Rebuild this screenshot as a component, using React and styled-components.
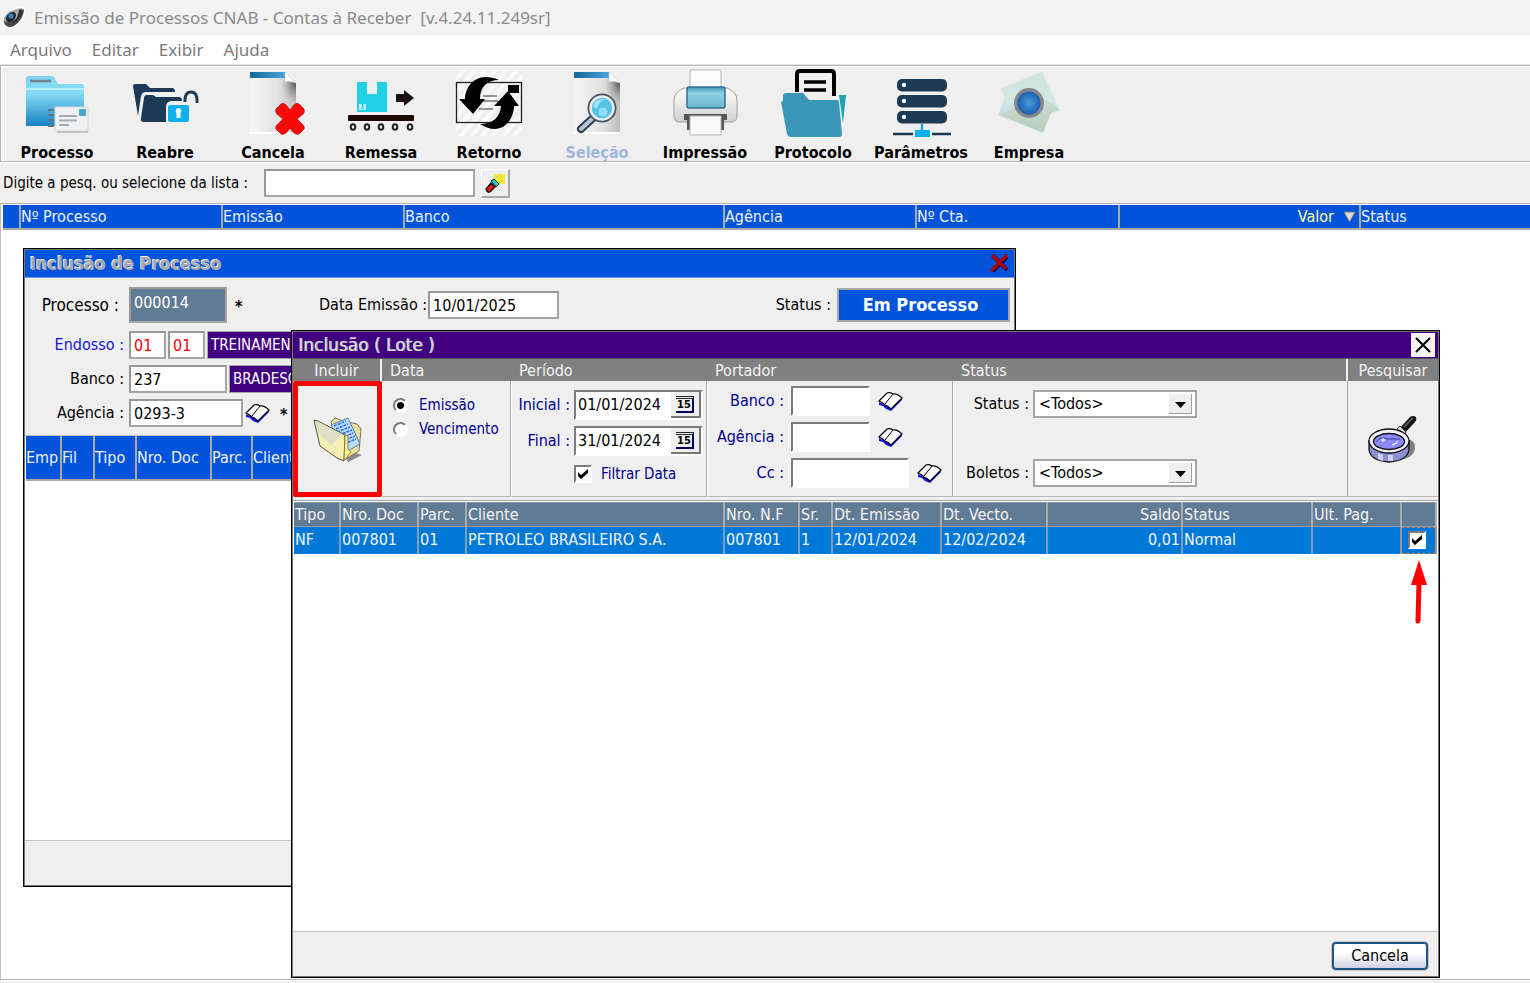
import React, { useState } from 'react';
import styled, { createGlobalStyle, css } from 'styled-components';

const GlobalStyle = createGlobalStyle`
  * { box-sizing: border-box; }
  body {
    margin: 0;
    background: #fff;
    color: #000;
    font-family: 'DejaVu Sans Condensed', 'DejaVu Sans', 'Noto Sans', sans-serif;
    font-size: 16px;
    line-height: 18px;
  }
  input, select, button { font: inherit; color: inherit; margin: 0; border-radius: 0; }
  button { padding: 0; border: 0; background: none; cursor: pointer; }
  svg { display: block; flex: none; }
`;

/* ---------- main window ---------- */

const Page = styled.div`
  min-height: 100vh;
  display: flex;
  flex-direction: column;
  background: #efefef;
`;

const TitleBar = styled.header`
  display: flex;
  align-items: center;
  gap: 8px;
  height: 35px;
  padding: 0 2px;
  background: #f3f3f3;
  color: #8a8a8a;

  h1 {
    margin: 0;
    font: 400 17px/24px 'Noto Sans', 'Open Sans', sans-serif;
    white-space: pre;
  }
`;

const MenuBar = styled.nav`
  display: flex;
  gap: 20px;
  height: 30px;
  padding: 0 10px;
  align-items: center;
  background: #fff;
  border-bottom: 1px solid #e4e4e4;
`;

const MenuItem = styled.button`
  color: #7b7b7b;
  font: 400 17px/24px 'Noto Sans', 'Open Sans', sans-serif;
`;

const Toolbar = styled.div`
  display: grid;
  grid-template-columns: repeat(10, 108px);
  height: 97px;
  padding: 2px;
  border: 1px solid #b4b4b4;
  border-right: 0;
  box-shadow: inset 1px 1px #fff;
`;

const ToolButton = styled.button`
  display: flex;
  flex-direction: column;
  align-items: center;
  gap: 6px;
  font-weight: 700;
  line-height: 18px;
  color: ${props => (props.disabled ? '#9db8d9' : '#000')};
`;

const SearchRow = styled.div`
  display: flex;
  align-items: center;
  gap: 6px;
  height: 42px;
  padding: 0 3px;
  border-top: 1px solid #fff;
  border-bottom: 1px solid #b4b4b4;

  label {
    margin-right: 10px;
    font-size: 15px;
  }
`;

const TextBox = styled.input`
  width: ${props => props.$w}px;
  height: 28px;
  padding: 0 3px;
  border: 2px solid #a6a6a6;
  border-top-color: #999;
  border-left-color: #999;
  background: #fff;
  outline: 0;
  ${props => props.$red && 'color: #f00000;'}
  ${props => props.$slate && css`
    height: 36px;
    padding-bottom: 6px;
    background: #627b95;
    color: #fff;
  `}
`;

const TorchButton = styled.button`
  display: grid;
  place-items: center;
  width: 29px;
  height: 29px;
  border: 1px solid #fff;
  border-right: 2px solid #a8a8a8;
  border-bottom: 2px solid #a8a8a8;
`;

const BlueTable = styled.table`
  width: 100%;
  table-layout: fixed;
  border-collapse: collapse;

  th {
    height: ${props => props.$h}px;
    padding: 0;
    border-right: 2px solid #aaa9a6;
    border-bottom: 2px solid #aaa9a6;
    background: #0054dc;
    color: #f2f2f2;
    font-weight: 400;
    text-align: left;
    white-space: nowrap;
    overflow: hidden;
  }
  th:last-child { border-right: 0; }
`;

const SortHead = styled.span`
  display: flex;
  justify-content: flex-end;
  align-items: center;
  gap: 9px;
  padding-right: 3px;
  color: #ffff9a;
`;

const Desktop = styled.main`
  position: relative;
  flex: 1;
  min-height: 749px;
  border-left: 1px solid #bdbdbd;
  border-bottom: 1px solid #b4b4b4;
  background: #fff;
`;

const GridHolder = styled.div`
  padding: 1px 0 0 2px;
  border-left: 1px solid #bdbdbd;
  background: #fff;
`;

const BottomStrip = styled.footer`
  height: 3px;
  border-top: 1px solid #fff;
`;

/* ---------- inner windows ---------- */

const Window = styled.section`
  position: absolute;
  display: flex;
  flex-direction: column;
  border: 1px solid #000;
  background: #efefef;
  box-shadow: inset 0 0 0 1px #777;
  padding: 1px;
`;

const ProcessWindow = styled(Window)`
  top: 18px;
  left: 22px;
  right: 514px;
  bottom: 92px;
`;

const BatchWindow = styled(Window)`
  top: 100px;
  left: 290px;
  right: 90px;
  bottom: 1px;
`;

const Caption = styled.div`
  display: flex;
  align-items: center;
  justify-content: space-between;
  height: ${props => (props.$purple ? 27 : 28)}px;
  padding: 0 ${props => (props.$purple ? 3 : 4)}px 0 5px;
  background: ${props => (props.$purple ? '#400080' : '#0054dc')};
  border-bottom: 1px solid ${props => (props.$purple ? '#555' : '#6f9de8')};

  h2 {
    margin: 0;
    line-height: 22px;
    ${props => (props.$purple ? css`
      font-family: 'DejaVu Sans', sans-serif;
      font-size: 17px;
      font-weight: 400;
      color: #d6dcd6;
      text-shadow: 1px 0 #a9b4bc;
    ` : css`
      font-size: 18px;
      font-weight: 700;
      color: #a8a8ac;
      text-shadow: -1px -1px #f0f0f4;
    `)}
  }
`;

const CloseBox = styled.button`
  display: grid;
  place-items: center;
  width: 24px;
  height: 24px;
  background: #f3f3f3;
`;

const Form = styled.form`
  display: flex;
  flex-direction: column;
  gap: 6px;
  padding: 7px 4px 8px 0;
  border-bottom: 1px solid #bdbdbd;
`;

const FormRow = styled.div`
  display: flex;
  align-items: center;
  gap: ${props => props.$gap || 0}px;
  height: ${props => props.$h || 28}px;
`;

const Label = styled.label`
  width: ${props => (props.$w ? props.$w + 'px' : 'auto')};
  padding-right: ${props => props.$pad || 4}px;
  flex: none;
  text-align: right;
  white-space: nowrap;
  font-size: ${props => (props.$big ? 17 : 16)}px;
  color: ${props => props.$color || '#000'};
`;

const Star = styled.b`
  width: ${props => props.$w}px;
  padding: 4px 8px 0;
`;

const Spacer = styled.span`
  flex: 1;
`;

const StatusBox = styled.output`
  display: grid;
  place-items: center;
  width: 173px;
  height: 34px;
  border: 2px solid #a6a6a6;
  background: #0054dc;
  color: #fff;
  font-size: 18px;
  font-weight: 700;
  padding-right: 6px;
`;

const PurpleBox = styled.output`
  flex: 1;
  height: 28px;
  padding: 0 3px;
  border: 1px solid #a6a6a6;
  background: #400080;
  color: #fff;
  font-size: 15px;
  line-height: 26px;
`;

const WhitePane = styled.div`
  flex: 1;
  padding: 0 1px;
  background: #fff;
  border-bottom: 1px solid #c4c4c4;
`;

const Foot = styled.div`
  display: flex;
  align-items: center;
  justify-content: flex-end;
  height: 44px;
  padding: 4px 10px 0;
`;

const CancelButton = styled.button`
  width: 96px;
  height: 28px;
  border: 2px solid #1d5384;
  border-radius: 4px;
  background: linear-gradient(#fff 40%, #cfcfe4);
  box-shadow: 0 0 0 1px #c9c5ba;
`;

/* ---------- filters of the batch window ---------- */

const Filters = styled.form`
  display: grid;
  grid-template-columns: 89px 129px 196px 246px 1fr 90px;
  height: 138px;
`;

const Panel = styled.fieldset`
  min-width: 0;
  margin: 0;
  padding: 0;
  border: 0;
  display: flex;
  flex-direction: column;
`;

const PanelTitle = styled.div`
  height: 22px;
  padding: 0 8px;
  background: #808080;
  color: #f4f4f4;
  line-height: 23px;
  text-align: ${props => (props.$center ? 'center' : 'left')};
  border-right: ${props => (props.$line ? '2px solid #efefef' : 0)};
`;

const PanelBody = styled.div`
  flex: 1;
  display: flex;
  flex-direction: column;
  gap: ${props => props.$gap || 0}px;
  padding: ${props => props.$pad || '0'};
  border-right: 1px solid #a6a6a6;
  border-left: 1px solid #fff;
  border-bottom: 1px solid #b9b9b9;
  color: #00008b;
`;

const IncludeButton = styled.button`
  display: grid;
  place-items: center;
  flex: 1;
  border: 5px solid #f00;
  border-radius: 2px;
`;

const SearchButton = styled.button`
  display: grid;
  place-items: center;
  flex: 1;
  border-bottom: 1px solid #b9b9b9;
`;

const sunken = css`
  border: 2px solid;
  border-color: #7b7b7b #fff #fff #7b7b7b;
  background-color: #fff;
`;

const Radio = styled.input`
  appearance: none;
  width: 15px;
  height: 15px;
  border: 2px solid;
  border-color: #7b7b7b #fff #fff #7b7b7b;
  border-radius: 50%;
  background: #fff;

  &:checked { background: radial-gradient(circle, #000 3px, #fff 4px); }
`;

const Check = styled.input`
  appearance: none;
  width: 18px;
  height: 18px;
  ${sunken}
  &:checked {
    background-image: url("data:image/svg+xml,%3Csvg xmlns='http://www.w3.org/2000/svg' viewBox='0 0 14 14'%3E%3Cpath d='M2 5v4l3 3 7-6V2L5 8z'/%3E%3C/svg%3E");
  }
`;

const Option = styled.label`
  display: flex;
  align-items: center;
  gap: ${props => props.$gap}px;
  height: 24px;
  font-size: 15px;
`;

const DateBox = styled.div`
  display: flex;
  width: 129px;
  height: 30px;
  ${sunken}

  input {
    flex: 1;
    min-width: 0;
    padding: 0 0 0 2px;
    border: 0;
    color: #000;
    outline: 0;
  }
`;

const CalendarButton = styled.button`
  display: grid;
  place-items: center;
  width: 30px;
  background: #efefef;
  border-right: 2px solid #777;
  border-bottom: 2px solid #777;

  span {
    width: 18px;
    height: 17px;
    border-top: 3px double #222;
    border-right: 2px solid #000060;
    border-bottom: 2px solid #000060;
    color: #000;
    font-size: 11px;
    font-weight: 700;
    line-height: 12px;
  }
`;

const SunkenInput = styled.input`
  width: ${props => props.$w}px;
  height: 30px;
  margin-right: 8px;
  outline: 0;
  ${sunken}
`;

const SelectBox = styled.span`
  position: relative;

  select {
    appearance: none;
    width: 164px;
    height: 28px;
    padding: 0 4px;
    border: 2px solid #a6a6a6;
    background: #fff;
    color: #000;
    outline: 0;
  }
  svg {
    position: absolute;
    right: 5px;
    top: 4px;
    pointer-events: none;
  }
`;

const BatchTable = styled.table`
  width: 100%;
  table-layout: fixed;
  border-collapse: collapse;
  border-top: 1px solid #8f8f8f;

  th, td {
    padding: 0 1px;
    color: #f4f4f4;
    font-weight: 400;
    text-align: left;
    white-space: nowrap;
    border-right: 2px solid #a9adb1;
  }
  th {
    height: 24px;
    background: #627b95;
    border-bottom: 1px solid #8f9aa5;
  }
  td {
    height: 27px;
    background: #0078d7;
    border-right-color: #7f9dbb;
  }
  td:last-child {
    padding: 0 6px;
    outline: 1px dashed #e08040;
    outline-offset: -1px;
  }
  th:nth-child(9), td:nth-child(9) { text-align: right; }
`;

const BatchPane = styled(WhitePane)`
  position: relative;
  margin-top: 3px;
  border-top: 1px solid #a6a6a6;
  padding: 1px 1px 0;
`;

const Pointer = styled.svg`
  position: absolute;
  right: 11px;
  top: 59px;
`;

/* ---------- drawings ---------- */

const Logo = () => (
  <svg width="24" height="24" viewBox="0 0 24 24">
    <path d="M1 17C-1 9 8 0 21 1q4 2 2 8C19 21 8 26 2 22z" fill="#fbfbfb" />
    <path d="M2 17C1 10 6 6 11 5q-1 6-4 9c4 2 10-3 14-10q1-2 1 0C21 14 13 21 8 21q-4 0-6-4z" fill="#43474a" />
    <path d="M2 14C3 8 9 3 20 2q1 3-3 7-5 6-10 7-4 1-5-2z" fill="#a9b0b4" />
    <ellipse cx="9" cy="11" rx="6" ry="4" fill="#24292d" transform="rotate(-45 9 11)" />
    <circle cx="9" cy="10" r="2.600" fill="#2f86c8" />
    <path d="M17 4q4-2 4 1-3 9-11 13 6-6 7-14z" fill="#303438" />
  </svg>
);

const Icon = ({ children }) => (
  <svg width="72" height="70" viewBox="0 0 72 70" aria-hidden="true">{children}</svg>
);

const Sheet = ({ id }) => (
  <>
    <defs>
      <linearGradient id={id}>
        <stop offset="0" stopColor="#f6f6f6" />
        <stop offset=".6" stopColor="#e2e2e2" />
        <stop offset="1" stopColor="#bdbdbd" />
      </linearGradient>
      <radialGradient id={id + 'r'} cx="1" cy=".15" r=".5">
        <stop offset="0" stopColor="#555" />
        <stop offset="1" stopColor="#999" stopOpacity="0" />
      </radialGradient>
      <linearGradient id={id + 'b'}>
        <stop offset="0" stopColor="#15679e" />
        <stop offset="1" stopColor="#4aa3d6" />
      </linearGradient>
    </defs>
    <path d="M13 4h35l11 11v49H13z" fill={`url(#${id})`} />
    <path d="M30 10h18l11 5v34H30z" fill={`url(#${id}r)`} />
    <path d="M13 4h35v6H13z" fill={`url(#${id}b)`} />
    <path d="M48 4l11 11q-8-3-11-1z" fill="#fdfdfd" stroke="#ccc" strokeWidth=".6" />
    <path d="M12 65h47" stroke="#fff" strokeWidth="2" />
  </>
);

const ProcessoIcon = () => (
  <Icon>
    <defs>
      <linearGradient id="pf" x2="0" y2="1">
        <stop offset="0" stopColor="#7fd3f0" />
        <stop offset=".35" stopColor="#86dcf6" />
        <stop offset="1" stopColor="#1680c2" />
      </linearGradient>
    </defs>
    <path d="M5 10q0-2 2-2h23q3 0 4 3l3 5h24q2 0 2 2v40H5z" fill="url(#pf)" />
    <path d="M5 21h58" stroke="#b9effc" strokeWidth="2" />
    <path d="M9 13h21" stroke="#71848f" strokeWidth="2.600" />
    <rect x="34" y="39" width="33" height="24" rx="1" fill="#f0f1f3" stroke="#d4d7da" />
    <path d="M36 64h31" stroke="#c4c6c8" strokeWidth="2" />
    <path d="M38 48h18M38 52.500h18M38 57h10" stroke="#a5abb0" strokeWidth="2" />
    <rect x="58" y="41" width="7" height="7" rx="1" fill="#4aa6d8" />
    <path d="M27 42h6M27 47h6M27 52h6M27 58h6" stroke="#5b7386" strokeWidth="2" />
  </Icon>
);

const ReabreIcon = () => (
  <Icon>
    <path d="M4 18q0-2 2-2h11l4 4h22q3 0 3 4H17q-4 0-5 4l-3 20z" fill="#1c3a55" />
    <path d="M15 30q0-3 3-3h5q2 0 4 2h23q3 0 3 4h-10q-6 0-6 6v15H15q-4 0-3-4z" fill="#1c3a55" />
    <path d="M56 34v-2q0-8 6-8t6 8v3" fill="none" stroke="#1f3d58" strokeWidth="3" />
    <rect x="39" y="37" width="21" height="17" rx="2" fill="#0fb0ec" />
    <path d="M49.500 40a3 3 0 0 1 2 5v5h-4v-5a3 3 0 0 1 2-5z" fill="#fff" />
  </Icon>
);

const CancelaIcon = () => (
  <Icon>
    <Sheet id="sc" />
    <path d="M44 36q2-2 5 1l4 5 4-5q3-3 5-1l5 5q1 3-1 5l-6 5 6 6q2 2 1 4l-5 5q-2 1-5-1l-4-5-4 5q-3 2-5 1l-5-5q-1-2 1-4l6-6-6-5q-2-2-1-5z" fill="#f50909" stroke="#c40c0c" strokeWidth=".8" />
  </Icon>
);

const RemessaIcon = () => (
  <Icon>
    <path d="M12 14h10v12h10V14h10v30H12z" fill="#20d3e4" />
    <path d="M14 36h7v6h-7z" fill="#b9f3f8" />
    <path d="M17.500 36v3M16 40h3" stroke="#20b3c4" />
    <path d="M51 26h8v-4l10 8-10 8v-4h-8z" fill="#1a1010" />
    <rect x="3" y="47" width="66" height="6" rx="1" fill="#1e0a0a" />
    {[8, 22, 36, 50, 65].map(x => (
      <ellipse key={x} cx={x} cy="59" rx="2.300" ry="2.800" fill="none" stroke="#222" strokeWidth="2" />
    ))}
  </Icon>
);

const RetornoIcon = () => (
  <Icon>
    <defs>
      <pattern id="hatch" width="8" height="8" patternUnits="userSpaceOnUse" patternTransform="rotate(40)">
        <rect width="4" height="8" fill="#fafafa" />
      </pattern>
    </defs>
    <rect x="3" y="2" width="66" height="66" fill="url(#hatch)" />
    <rect x="3.500" y="14.500" width="65" height="40" fill="none" stroke="#222" strokeWidth="1.300" />
    <rect x="55" y="17" width="11" height="8" />
    <path d="M30 28h14M27 33h18M26 41h14" stroke="#333" />
    <path d="M6 31h6C12 20 22 2 46 12 34 12 27 19 27 31h5L20 46z" />
    <path d="M66 38h-5C61 52 48 70 27 56c13 0 20-7 21-18h-7l14-15z" />
  </Icon>
);

const SelecaoIcon = () => (
  <Icon>
    <Sheet id="ss" />
    <path d="M32 50L20 61" stroke="#2f3c4d" strokeWidth="8" strokeLinecap="round" />
    <path d="M32 50L20 61" stroke="#b9c6d6" strokeWidth="4" strokeLinecap="round" />
    <circle cx="41" cy="40" r="13" fill="#57c3e4" stroke="#4a525c" strokeWidth="3" />
    <circle cx="41" cy="40" r="11.500" fill="none" stroke="#e8edf2" strokeWidth="2.500" />
    <path d="M32 38q3-8 12-7-7 3-8 10z" fill="#a6e2f4" />
    <circle cx="42" cy="44" r="4.500" fill="#8fdcf3" />
  </Icon>
);

const ImpressaoIcon = () => (
  <Icon>
    <defs>
      <linearGradient id="pr" x2="0" y2="1">
        <stop offset="0" stopColor="#fff" />
        <stop offset="1" stopColor="#cfcfcf" />
      </linearGradient>
      <linearGradient id="pb" x2="0" y2="1">
        <stop offset="0" stopColor="#4693b8" />
        <stop offset=".3" stopColor="#8fd0e2" />
        <stop offset="1" stopColor="#6cb6cf" />
      </linearGradient>
    </defs>
    <rect x="21" y="2" width="31" height="24" rx="1" fill="#fbfbfb" stroke="#b5b5b5" />
    <path d="M15 20h43q10 4 10 12v16q0 6-6 6H11q-6 0-6-6V32q0-8 10-12z" fill="url(#pr)" stroke="#9d9d9d" />
    <rect x="18" y="19" width="38" height="21" rx="2" fill="url(#pb)" stroke="#2f6f94" strokeWidth="1.500" />
    <path d="M15 46h43v6h-3v10H18V52h-3z" fill="#555" />
    <path d="M21 48h31v19H21z" fill="#fafafa" stroke="#b5b5b5" />
  </Icon>
);

const ProtocoloIcon = () => (
  <Icon>
    <path d="M20 24V6q0-3 3-3h31q3 0 3 3v22" fill="none" stroke="#000" strokeWidth="4" />
    <path d="M27 14h22M27 22h22" stroke="#000" strokeWidth="3.500" />
    <path d="M4 34l2-1v-5q0-3 3-3h17l6 7h28q2 0 2 2l3 32q0 3-3 3H14q-3 0-4-3z" fill="#3b97b8" />
    <path d="M62 27h7l-3 28z" fill="#1ea2ad" />
  </Icon>
);

const ParametrosIcon = () => (
  <Icon>
    {[11, 27, 43].map(y => (
      <g key={y}>
        <rect x="12" y={y} width="50" height="12.500" rx="5" fill="#1d3a54" />
        <circle cx="19" cy={y + 6} r="2.200" fill="#fff" />
      </g>
    ))}
    <path d="M37 56v8" stroke="#16a5e6" strokeWidth="2.500" />
    <rect x="30" y="62" width="15" height="7" fill="#0fb0ee" />
    <path d="M8 66h20M47 66h19" stroke="#1d3a54" strokeWidth="2.500" />
  </Icon>
);

const EmpresaIcon = () => (
  <Icon>
    <defs>
      <linearGradient id="eh" x2="0" y2="1">
        <stop offset="0" stopColor="#cfe6d6" />
        <stop offset=".5" stopColor="#d3e6ea" />
        <stop offset="1" stopColor="#b7c4bb" />
      </linearGradient>
      <radialGradient id="eb">
        <stop offset="0" stopColor="#4a9be0" />
        <stop offset="1" stopColor="#1c5fae" />
      </radialGradient>
    </defs>
    <path d="M49 3l18 39-9 3-8 20L5 47l6-17-3-10z" fill="url(#eh)" stroke="#e6efe8" />
    <path d="M36 35l18-3 13 10-9 3-8 20L5 47z" fill="#b9d4bd" opacity=".55" />
    <circle cx="36" cy="35" r="15" fill="#85878c" />
    <circle cx="36" cy="35" r="11.500" fill="url(#eb)" />
  </Icon>
);

const TorchIcon = () => (
  <svg width="22" height="22" viewBox="0 0 22 22">
    <path d="M10 2h11v10h-8l-3-4z" fill="#f6f032" />
    <path d="M12 4h2v2h-2zM16 3h2v2h-2zM17 8h2v2h-2z" fill="#d8d070" />
    <path d="M7 9l3-2 5 5-3 3z" fill="#19c7d4" stroke="#111" />
    <path d="M7 11l4 4-5 5q-3 1-4-3z" fill="#f01010" stroke="#111" strokeWidth="1.300" />
  </svg>
);

const BookIcon = () => (
  <svg width="25" height="21" viewBox="0 0 25 21">
    <path d="M1 11v3l4 1 3 3 5 2 11-11V7L13 17z" fill="#1414e6" />
    <path d="M1 10l8-8q3-1 6 1 4-1 9 4L13 18q-3-3-6-4-3-3-6-4z" fill="#fff" stroke="#000" strokeWidth="1.200" />
    <path d="M15 3L7 13" fill="none" stroke="#000" />
  </svg>
);

const FolderIcon = () => (
  <svg width="50" height="47" viewBox="0 0 50 47">
    <path d="M31 40l12-3 6 2-14 7z" fill="#8a8a8a" />
    <path d="M18 6l4-4 8 3 14 3 4 5-2 22-15 9z" fill="#e9dfa0" stroke="#7b7650" />
    <path d="M18 9l17-7 12 26-14 8z" fill="#b9dcff" stroke="#55809f" />
    <path d="M21 10l12-5M23 13l12-5M24 16l13-5M26 19l13-5M28 22l12-5M29 25l13-5M31 28l12-5" stroke="#2a68e8" strokeWidth="1.500" strokeDasharray="3 1" />
    <path d="M1 4l4 1 27 14-1 26-7-3L7 30z" fill="#f6efb4" stroke="#555136" />
    <path d="M2 5l4 1 24 13-12 10L6 18z" fill="#d9d9cc" opacity=".8" />
    <path d="M32 19l3 1v13l3 3-7 9z" fill="#f9f08c" stroke="#77713c" strokeWidth=".8" />
  </svg>
);

const LensIcon = () => (
  <svg width="50" height="48" viewBox="0 0 50 48">
    <path d="M40 24q8 2 7 10-2 8-11 10z" fill="#7c8478" />
    <path d="M31 14L42 2q3-2 6 0 1 3-1 5L36 19z" fill="#161616" />
    <path d="M36 12L45 3" stroke="#666" strokeWidth="1.500" />
    <path d="M29 14l3-3 6 6-2 4z" fill="#d8d8d8" stroke="#333" />
    <path d="M1 26v9q2 11 20 12 18-1 20-12v-9z" fill="#8d8fd0" stroke="#111" strokeWidth="1.300" />
    <path d="M10 38v6l5 2v-6zM20 40h5v6h-5z" fill="#d3d0ff" />
    <ellipse cx="21" cy="26" rx="20" ry="12" fill="#f1f1f6" stroke="#111" strokeWidth="1.300" />
    <ellipse cx="21" cy="26.500" rx="15.500" ry="8" fill="#8c8cf6" stroke="#111" strokeWidth="1.300" />
    <path d="M8 27q4-6 12-3h12" fill="none" stroke="#3c3c9a" />
    <path d="M15 23v4M13 25h4M24 30l5-2v-2" fill="none" stroke="#fff" />
  </svg>
);

const RedX = () => (
  <svg width="21" height="19" viewBox="0 0 21 19">
    <path d="M4 2l14 14M18 3L4 17" stroke="#06065c" strokeWidth="4" />
    <path d="M3 1l14 14M18 1L2 17" stroke="#a80808" strokeWidth="3.500" />
  </svg>
);

const DropArrow = () => (
  <svg width="23" height="20" viewBox="0 0 23 20">
    <path d="M0 0h23v20H0z" fill="#a0a0a0" />
    <path d="M0 0h22v19H0z" fill="#efefef" />
    <path d="M6 8h11l-5.500 6z" fill="#000" />
  </svg>
);

const tools = [
  { name: 'Processo', Art: ProcessoIcon },
  { name: 'Reabre', Art: ReabreIcon },
  { name: 'Cancela', Art: CancelaIcon },
  { name: 'Remessa', Art: RemessaIcon },
  { name: 'Retorno', Art: RetornoIcon },
  { name: 'Seleção', Art: SelecaoIcon, disabled: true },
  { name: 'Impressão', Art: ImpressaoIcon },
  { name: 'Protocolo', Art: ProtocoloIcon },
  { name: 'Parâmetros', Art: ParametrosIcon },
  { name: 'Empresa', Art: EmpresaIcon },
];

const mainWidths = [17, 202, 182, 320, 192, 203, 241];
const itemCols = [[35, 'Emp'], [33, 'Fil'], [42, 'Tipo'], [75, 'Nro. Doc'], [41, 'Parc.'], [null, 'Cliente']];
const batchCols = [
  [46, 'Tipo', 'NF'],
  [78, 'Nro. Doc', '007801'],
  [48, 'Parc.', '01'],
  [null, 'Cliente', 'PETROLEO BRASILEIRO S.A.'],
  [75, 'Nro. N.F', '007801'],
  [33, 'Sr.', '1'],
  [109, 'Dt. Emissão', '12/01/2024'],
  [106, 'Dt. Vecto.', '12/02/2024'],
  [135, 'Saldo', '0,01'],
  [130, 'Status', 'Normal'],
  [89, 'Ult. Pag.', ''],
];

const DateField = ({ id, value }) => (
  <DateBox>
    <input id={id} defaultValue={value} />
    <CalendarButton type="button"><span>15</span></CalendarButton>
  </DateBox>
);

const StatusSelect = ({ id }) => (
  <SelectBox>
    <select id={id}><option>&lt;Todos&gt;</option></select>
    <DropArrow />
  </SelectBox>
);

const Processo = () => (
  <ProcessWindow>
    <Caption>
      <h2>Inclusão de Processo</h2>
      <button type="button" aria-label="Fechar"><RedX /></button>
    </Caption>
    <Form>
      <FormRow $h={40}>
        <Label $w={104} $pad={10} $big htmlFor="processo">Processo :</Label>
        <TextBox id="processo" $w={98} $slate defaultValue="000014" />
        <Star $w={92}>*</Star>
        <Label $pad={1} htmlFor="emissao">Data Emissão :</Label>
        <TextBox id="emissao" $w={131} defaultValue="10/01/2025" />
        <Spacer />
        <Label $pad={6} htmlFor="status">Status :</Label>
        <StatusBox id="status">Em Processo</StatusBox>
      </FormRow>
      <FormRow $gap={2}>
        <Label $w={102} $pad={3} $color="#1414d2" htmlFor="endosso">Endosso :</Label>
        <TextBox id="endosso" $w={37} $red defaultValue="01" />
        <TextBox aria-label="Filial" $w={37} $red defaultValue="01" />
        <PurpleBox>TREINAMEN</PurpleBox>
      </FormRow>
      <FormRow $gap={2}>
        <Label $w={102} $pad={3} htmlFor="banco">Banco :</Label>
        <TextBox id="banco" $w={98} defaultValue="237" />
        <PurpleBox>BRADESCO</PurpleBox>
      </FormRow>
      <FormRow $gap={2}>
        <Label $w={102} $pad={3} htmlFor="agencia">Agência :</Label>
        <TextBox id="agencia" $w={114} defaultValue="0293-3" />
        <button type="button" aria-label="Procurar agência"><BookIcon /></button>
        <Star>*</Star>
      </FormRow>
    </Form>
    <WhitePane>
      <BlueTable $h={44}>
        <colgroup>
          {itemCols.map(([w, name]) => <col key={name} width={w} />)}
        </colgroup>
        <thead>
          <tr>{itemCols.map(([, name]) => <th key={name}>{name}</th>)}</tr>
        </thead>
      </BlueTable>
    </WhitePane>
    <Foot />
  </ProcessWindow>
);

const Lote = () => {
  const [tipoData, setTipoData] = useState('emissao')

  return (
    <BatchWindow>
      <Caption $purple>
        <h2>Inclusão ( Lote )</h2>
        <CloseBox type="button" aria-label="Fechar">
          <svg width="16" height="16" viewBox="0 0 16 16">
            <path d="M1 1l14 14M15 1L1 15" stroke="#000" strokeWidth="2" />
          </svg>
        </CloseBox>
      </Caption>
      <Filters>
        <Panel>
          <PanelTitle $center $line>Incluir</PanelTitle>
          <IncludeButton type="button" aria-label="Incluir"><FolderIcon /></IncludeButton>
        </Panel>
        <Panel>
          <PanelTitle>Data</PanelTitle>
          <PanelBody $pad="12px 0 0 10px">
            <Option $gap={11}>
              <Radio type="radio" name="tipo" checked={tipoData === 'emissao'} onChange={() => setTipoData('emissao')} />
              Emissão
            </Option>
            <Option $gap={11}>
              <Radio type="radio" name="tipo" checked={tipoData === 'vencimento'} onChange={() => setTipoData('vencimento')} />
              Vencimento
            </Option>
          </PanelBody>
        </Panel>
        <Panel>
          <PanelTitle>Período</PanelTitle>
          <PanelBody $gap={6} $pad="9px 0 0">
            <FormRow $h={30}>
              <Label $w={62} $color="#00008b" htmlFor="inicial">Inicial :</Label>
              <DateField id="inicial" value="01/01/2024" />
            </FormRow>
            <FormRow $h={30}>
              <Label $w={62} $color="#00008b" htmlFor="final">Final :</Label>
              <DateField id="final" value="31/01/2024" />
            </FormRow>
            <FormRow $h={24}>
              <Label as="span" $w={62} />
              <Option $gap={9}><Check type="checkbox" defaultChecked />Filtrar Data</Option>
            </FormRow>
          </PanelBody>
        </Panel>
        <Panel>
          <PanelTitle>Portador</PanelTitle>
          <PanelBody $gap={6} $pad="5px 0 0">
            <FormRow $h={30}>
              <Label $w={83} $pad={7} $color="#00008b" htmlFor="p-banco">Banco :</Label>
              <SunkenInput id="p-banco" $w={79} />
              <button type="button" aria-label="Procurar banco"><BookIcon /></button>
            </FormRow>
            <FormRow $h={30}>
              <Label $w={83} $pad={7} $color="#00008b" htmlFor="p-agencia">Agência :</Label>
              <SunkenInput id="p-agencia" $w={79} />
              <button type="button" aria-label="Procurar agência"><BookIcon /></button>
            </FormRow>
            <FormRow $h={30}>
              <Label $w={83} $pad={7} $color="#00008b" htmlFor="p-cc">Cc :</Label>
              <SunkenInput id="p-cc" $w={118} />
              <button type="button" aria-label="Procurar conta"><BookIcon /></button>
            </FormRow>
          </PanelBody>
        </Panel>
        <Panel>
          <PanelTitle $line>Status</PanelTitle>
          <PanelBody $gap={41} $pad="9px 0 0">
            <FormRow>
              <Label $w={79} htmlFor="f-status">Status :</Label>
              <StatusSelect id="f-status" />
            </FormRow>
            <FormRow>
              <Label $w={79} htmlFor="f-boletos">Boletos :</Label>
              <StatusSelect id="f-boletos" />
            </FormRow>
          </PanelBody>
        </Panel>
        <Panel>
          <PanelTitle $center>Pesquisar</PanelTitle>
          <SearchButton type="button" aria-label="Pesquisar"><LensIcon /></SearchButton>
        </Panel>
      </Filters>
      <BatchPane>
        <BatchTable>
          <colgroup>
            {batchCols.map(([w, name]) => <col key={name} width={w} />)}
            <col width="35" />
          </colgroup>
          <thead>
            <tr>{batchCols.map(([, name]) => <th key={name}>{name}</th>)}<th /></tr>
          </thead>
          <tbody>
            <tr>
              {batchCols.map(([, name, value]) => <td key={name}>{value}</td>)}
              <td><Option as="span"><Check type="checkbox" aria-label="Selecionar" defaultChecked /></Option></td>
            </tr>
          </tbody>
        </BatchTable>
        <Pointer width="16" height="64" viewBox="0 0 16 64">
          <path d="M8 0l8 25H0z" fill="#f00" />
          <path d="M8 22l-1 39" stroke="#f00" strokeWidth="5" strokeLinecap="round" />
        </Pointer>
      </BatchPane>
      <Foot><CancelButton type="button">Cancela</CancelButton></Foot>
    </BatchWindow>
  )
}

const App = () => (
  <Page>
    <GlobalStyle />
    <TitleBar>
      <Logo />
      <h1>{'Emissão de Processos CNAB - Contas à Receber  [v.4.24.11.249sr]'}</h1>
    </TitleBar>
    <MenuBar>
      {['Arquivo', 'Editar', 'Exibir', 'Ajuda'].map(m => <MenuItem key={m}>{m}</MenuItem>)}
    </MenuBar>
    <Toolbar>
      {tools.map(({ name, Art, disabled }) => (
        <ToolButton key={name} disabled={disabled}><Art />{name}</ToolButton>
      ))}
    </Toolbar>
    <SearchRow>
      <label htmlFor="pesq">Digite a pesq. ou selecione da lista :</label>
      <TextBox id="pesq" $w={211} />
      <TorchButton type="button" aria-label="Pesquisar"><TorchIcon /></TorchButton>
    </SearchRow>
    <GridHolder>
      <BlueTable $h={24}>
        <colgroup>
          {mainWidths.map((w, i) => <col key={i} width={w} />)}
          <col />
        </colgroup>
        <thead>
          <tr>
            <th />
            <th>Nº Processo</th>
            <th>Emissão</th>
            <th>Banco</th>
            <th>Agência</th>
            <th>Nº Cta.</th>
            <th>
              <SortHead>
                Valor
                <svg width="13" height="12" viewBox="0 0 13 12"><path d="M1 1h11L6.500 11z" fill="#ddd" stroke="#777" /></svg>
              </SortHead>
            </th>
            <th>Status</th>
          </tr>
        </thead>
      </BlueTable>
    </GridHolder>
    <Desktop>
      <Processo />
      <Lote />
    </Desktop>
    <BottomStrip />
  </Page>
);

export default App;
